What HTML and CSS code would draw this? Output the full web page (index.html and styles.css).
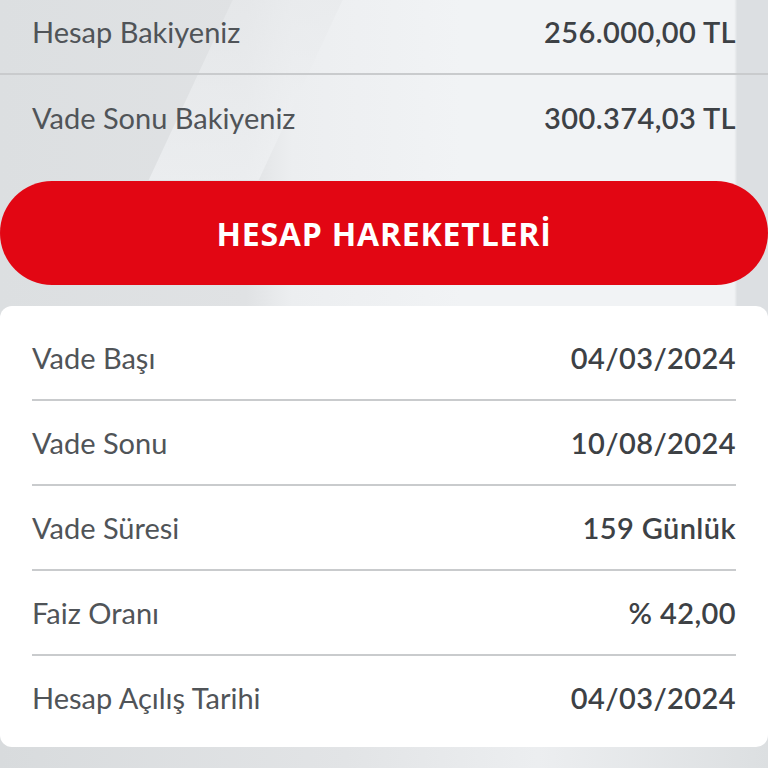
FILE: index.html
```html
<!DOCTYPE html>
<html lang="tr">
<head>
<meta charset="utf-8">
<title>Vadeli Hesap</title>
<link rel="stylesheet" href="styles.css">
</head>
<body>
<div class="page">
  <div class="bg-shape shape-a"></div>
  <div class="bg-shape shape-b"></div>
  <section class="summary">
    <div class="row row-first">
      <span class="label">Hesap Bakiyeniz</span>
      <span class="value">256.000,00 TL</span>
    </div>
    <div class="row">
      <span class="label">Vade Sonu Bakiyeniz</span>
      <span class="value">300.374,03 TL</span>
    </div>
  </section>
  <button class="action">HESAP HAREKETLERİ</button>
  <section class="card">
    <div class="crow">
      <span class="label">Vade Başı</span>
      <span class="value">04/03/2024</span>
    </div>
    <div class="crow">
      <span class="label">Vade Sonu</span>
      <span class="value">10/08/2024</span>
    </div>
    <div class="crow">
      <span class="label">Vade Süresi</span>
      <span class="value">159 Günlük</span>
    </div>
    <div class="crow">
      <span class="label">Faiz Oranı</span>
      <span class="value">% 42,00</span>
    </div>
    <div class="crow last">
      <span class="label">Hesap Açılış Tarihi</span>
      <span class="value">04/03/2024</span>
    </div>
  </section>
</div>
</body>
</html>
```
FILE: styles.css
```css
html, body {
  margin: 0;
  padding: 0;
}
body {
  width: 768px;
  height: 768px;
  overflow: hidden;
  background: #e3e5e7;
  font-family: Lato, "Noto Sans", sans-serif;
}
.page {
  position: relative;
  width: 768px;
  height: 768px;
  overflow: hidden;
  background: linear-gradient(90deg, #dcdfe1 0%, #e0e2e4 32%, #eceef0 38%, #f1f3f5 60%, #f1f3f5 95.6%, #dcdfe2 96%);
}
.bg-shape {
  position: absolute;
  z-index: 0;
}
.shape-a {
  left: 200px;
  top: -40px;
  width: 110px;
  height: 220px;
  background: linear-gradient(180deg, #e6e8ea, #f0f2f4);
  transform: skewX(-25deg);
  opacity: 0.7;
}
.shape-b {
  left: 0;
  top: 740px;
  width: 768px;
  height: 40px;
  background: linear-gradient(90deg, #d8dbdd 0%, #e2e4e6 45%, #eceef0 70%, #dcdfe1 100%);
}
.summary, .action, .card {
  position: relative;
  z-index: 1;
}
.summary {
  margin-top: -10px;
  display: flex;
  flex-direction: column;
}
.row {
  height: 85px;
  box-sizing: border-box;
  padding: 0 32px;
  display: flex;
  align-items: center;
  justify-content: space-between;
}
.row-first {
  border-bottom: 2px solid #c9cbcd;
}
.label {
  font-size: 29px;
  color: #505458;
  font-weight: 400;
  letter-spacing: 0;
}
.value {
  font-size: 29px;
  color: #3d4145;
  font-weight: 600;
  letter-spacing: 0.4px;
}
.action {
  display: block;
  box-sizing: border-box;
  margin: 21px 0 0 0;
  width: 768px;
  height: 104px;
  border: none;
  border-radius: 52px;
  background: #e20613;
  color: #ffffff;
  font-family: "Open Sans", Lato, sans-serif;
  font-weight: 700;
  font-size: 32px;
  letter-spacing: 0.8px;
  padding: 0;
}
.card {
  margin-top: 21px;
  background: #ffffff;
  border-radius: 12px;
  padding: 10px 32px 8px;
  display: flex;
  flex-direction: column;
}
.crow {
  height: 85px;
  box-sizing: border-box;
  display: flex;
  align-items: center;
  justify-content: space-between;
  border-bottom: 2px solid #c9cbcd;
}
.crow.last {
  border-bottom: none;
  height: 83px;
}
```
